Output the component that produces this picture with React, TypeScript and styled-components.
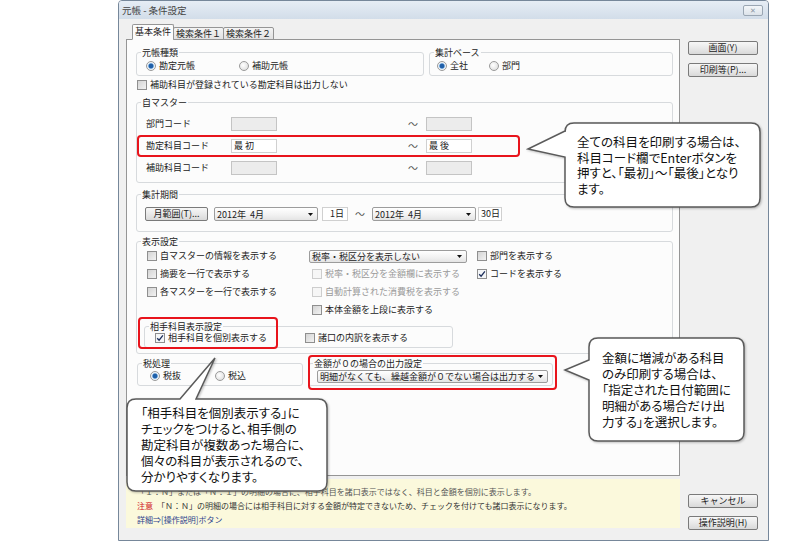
import React from 'react';
import styled, { createGlobalStyle } from 'styled-components';

const GlobalStyle = createGlobalStyle`
  html, body {
    margin: 0;
    padding: 0;
    background: #fff;
  }
  body {
    font-family: 'Noto Sans CJK JP', 'Noto Sans', sans-serif;
    color: #222;
  }
`;

const Page = styled.div`
  position: relative;
  width: 800px;
  height: 542px;
  overflow: hidden;
  background: #fff;
`;

/* ---------- window frame ---------- */

const Window = styled.div`
  margin-left: 118px;
  width: 651px;
  height: 541px;
  box-sizing: border-box;
  border: 1px solid #76879a;
  border-radius: 4px 4px 0 0;
  background: #f0f0f0;
  display: flex;
  flex-direction: column;
`;

const TitleBar = styled.div`
  height: 18px;
  flex: none;
  display: flex;
  align-items: center;
  justify-content: space-between;
  padding: 0 5px 0 3px;
  background: linear-gradient(#e6edf5, #d2dde9);
  border-radius: 3px 3px 0 0;
`;

const Title = styled.span`
  font-size: 9.5px;
  color: #444;
  line-height: 12px;
`;

const CloseButton = styled.span`
  width: 20px;
  height: 11px;
  box-sizing: border-box;
  border: 1px solid #9aa6b3;
  border-radius: 2px;
  background: linear-gradient(#f3f6f9, #dce3ea);
  display: flex;
  align-items: center;
  justify-content: center;
  color: #8a96a3;
  font-size: 7px;
  line-height: 7px;
`;

const Body = styled.div`
  flex: 1;
  display: flex;
`;

const MainCol = styled.div`
  width: 561px;
  box-sizing: border-box;
  padding: 6px 0 0 7px;
  display: flex;
  flex-direction: column;
`;

const SideCol = styled.div`
  flex: 1;
  display: flex;
  flex-direction: column;
  padding: 22px 0 10px 8px;
`;

const ButtonStack = styled.div`
  display: flex;
  flex-direction: column;
  gap: 8px;
  &:last-child {
    margin-top: auto;
  }
`;

const Button = styled.div<{ $w?: number }>`
  width: ${(p) => p.$w ?? 70}px;
  height: 14px;
  box-sizing: border-box;
  border: 1px solid #7a7a7a;
  border-radius: 2px;
  background: linear-gradient(#f7f7f7, #e9e9e9 50%, #d9d9d9);
  font-size: 9px;
  line-height: 12px;
  text-align: center;
  color: #222;
  white-space: nowrap;
  flex: none;
`;

/* ---------- tabs ---------- */

const TabStrip = styled.div`
  display: flex;
  align-items: flex-end;
  height: 15px;
  padding-left: 6px;
  margin-bottom: -1px;
  position: relative;
  z-index: 1;
`;

const Tab = styled.div<{ $active?: boolean }>`
  height: ${(p) => (p.$active ? 16 : 13)}px;
  box-sizing: border-box;
  padding: 0 2px;
  border: 1px solid #959595;
  border-bottom: ${(p) => (p.$active ? '1px solid #fcfcfc' : '1px solid #959595')};
  border-radius: 2px 2px 0 0;
  background: ${(p) => (p.$active ? '#fcfcfc' : 'linear-gradient(#f4f4f4, #e1e1e1)')};
  font-size: 9px;
  line-height: ${(p) => (p.$active ? 13 : 11)}px;
  margin-right: -1px;
  white-space: nowrap;
`;

const Panel = styled.div`
  height: 437px;
  flex: none;
  box-sizing: border-box;
  border: 1px solid #959595;
  background: #fcfcfc;
  padding: 7px 6px 0 9px;
  display: flex;
  flex-direction: column;
  align-items: stretch;
`;

const InfoBox = styled.div`
  margin-top: 3px;
  height: 49px;
  box-sizing: border-box;
  background: #fbf9dc;
  padding: 6px 0 0 11px;
  font-size: 8px;
  line-height: 14px;
  color: #555;
  white-space: nowrap;
`;

const InfoLine = styled.div<{ $tone?: 'plain' | 'link' }>`
  color: ${(p) => (p.$tone === 'link' ? '#2b3f8c' : p.$tone === 'plain' ? '#333' : '#555')};
`;

const Warn = styled.span`
  color: #d0151b;
  margin-right: 4px;
`;

/* ---------- group boxes ---------- */

const Group = styled.fieldset<{ $w?: number; $grow?: boolean; $mt?: number }>`
  margin: ${(p) => p.$mt ?? 0}px 0 0 0;
  padding: 0;
  border: 1px solid #d7dadd;
  border-radius: 3px;
  min-width: 0;
  box-sizing: border-box;
  flex: ${(p) => (p.$grow ? '1 1 0' : 'none')};
  ${(p) => (p.$w ? `width: ${p.$w}px;` : '')}
`;

const SubGroup = styled(Group)`
  margin: 5px 0 5px 7px;
`;

const Legend = styled.legend`
  font-size: 9px;
  line-height: 11px;
  padding: 0 1px;
  margin-left: 4px;
  color: #222;
  white-space: nowrap;
`;

const GroupRow = styled.div`
  display: flex;
  gap: 5px;
`;

const OptionRow = styled.div<{ $pl: number; $pt?: number; $pb?: number }>`
  display: flex;
  align-items: center;
  height: 12px;
  padding: ${(p) => p.$pt ?? 2}px 0 ${(p) => p.$pb ?? 3}px ${(p) => p.$pl}px;
`;

const Item = styled.label<{ $w?: number; $disabled?: boolean; $ml?: number }>`
  display: flex;
  align-items: center;
  gap: 2px;
  ${(p) => (p.$w ? `width: ${p.$w}px; flex: none;` : '')}
  margin-left: ${(p) => p.$ml ?? 0}px;
  font-size: 9px;
  line-height: 12px;
  color: ${(p) => (p.$disabled ? '#9a9a9a' : '#222')};
  white-space: nowrap;
`;

const RadioDot = styled.span<{ $on?: boolean }>`
  width: 10px;
  height: 10px;
  box-sizing: border-box;
  border-radius: 50%;
  border: 1px solid #9a9a9a;
  background: ${(p) =>
    p.$on
      ? 'radial-gradient(circle, #1f5fa8 0 2px, #7fb0e0 2.6px, #eef3f8 3.2px)'
      : 'radial-gradient(circle at 40% 40%, #ffffff, #d8d8d8)'};
  flex: none;
  margin-right: 1px;
`;

const CheckSquare = styled.span<{ $on?: boolean; $disabled?: boolean }>`
  width: 10px;
  height: 10px;
  box-sizing: border-box;
  border: 1px solid ${(p) => (p.$disabled ? '#cdcdcd' : '#8f8f8f')};
  background: ${(p) =>
    p.$disabled ? '#f6f6f6' : p.$on ? '#f4f6f8' : 'linear-gradient(135deg, #d4d4d4, #f2f2f2)'};
  display: flex;
  align-items: center;
  justify-content: center;
  flex: none;
  margin-right: 1px;
`;

const Radio = ({ label, on, w }: { label: string; on?: boolean; w?: number }) => (
  <Item $w={w}>
    <RadioDot $on={on} />
    {label}
  </Item>
);

const Check = ({
  label,
  on,
  disabled,
  w,
  ml,
}: {
  label: string;
  on?: boolean;
  disabled?: boolean;
  w?: number;
  ml?: number;
}) => (
  <Item $w={w} $disabled={disabled} $ml={ml}>
    <CheckSquare $on={on} $disabled={disabled}>
      {on && (
        <svg width="8" height="8" viewBox="0 0 8 8">
          <path d="M1.2 4.2 L3.1 6.2 L6.9 1.4" fill="none" stroke="#1d2f5c" strokeWidth="1.3" />
        </svg>
      )}
    </CheckSquare>
    {label}
  </Item>
);

const LooseCheck = styled.div`
  margin: 3px 0 6px 1px;
  height: 12px;
  display: flex;
`;

/* ---------- inputs ---------- */

const MasterGrid = styled.div`
  display: grid;
  grid-template-columns: 85px 46px 131px 18px 46px;
  grid-auto-rows: 14px;
  row-gap: 8px;
  align-items: center;
  padding: 9px 0 7px 9px;
`;

const FieldLabel = styled.span`
  font-size: 9px;
  line-height: 12px;
  white-space: nowrap;
`;

const Tilde = styled.span`
  font-size: 10px;
  color: #555;
  line-height: 12px;
`;

const TextBox = styled.div<{ $disabled?: boolean; $w?: number; $right?: boolean }>`
  ${(p) => (p.$w ? `width: ${p.$w}px;` : '')}
  height: 14px;
  box-sizing: border-box;
  border: 1px solid ${(p) => (p.$disabled ? '#c4c4c4' : '#d0d0d0')};
  background: ${(p) => (p.$disabled ? '#ececec' : '#fff')};
  font-size: 9px;
  line-height: 12px;
  padding: 0 3px 0 2px;
  text-align: ${(p) => (p.$right ? 'right' : 'left')};
  white-space: pre;
  flex: none;
`;

const PeriodRow = styled.div`
  display: flex;
  align-items: center;
  height: 14px;
  padding: 7px 0 10px 8px;
`;

const SelectBox = styled.div<{ $w: number; $h?: number }>`
  width: ${(p) => p.$w}px;
  height: ${(p) => p.$h ?? 14}px;
  box-sizing: border-box;
  border: 1px solid #9c9c9c;
  border-radius: 2px;
  background: linear-gradient(#ffffff, #f1f1f1 60%, #e4e4e4);
  display: flex;
  align-items: center;
  justify-content: space-between;
  padding: 0 4px 0 2px;
  font-size: 9px;
  line-height: 11px;
  white-space: pre;
  flex: none;
`;

const Select = ({ text, w, h }: { text: string; w: number; h?: number }) => (
  <SelectBox $w={w} $h={h}>
    {text}
    <svg width="5" height="3" viewBox="0 0 5 3">
      <path d="M0 0 H5 L2.5 3 Z" fill="#111" />
    </svg>
  </SelectBox>
);

const Gap = styled.span<{ $w: number }>`
  width: ${(p) => p.$w}px;
  flex: none;
  text-align: center;
  font-size: 10px;
  color: #555;
  line-height: 12px;
`;

const DisplayGrid = styled.div`
  display: grid;
  grid-template-columns: 162px 168px 1fr;
  grid-auto-rows: 12px;
  row-gap: 6px;
  align-items: center;
  padding: 3px 0 0 10px;
`;

const Empty = styled.span``;

const LowerRow = styled.div`
  display: flex;
  gap: 5px;
  margin: 4px 0 0 1px;
`;

const ZeroRow = styled.div`
  padding: 1px 0 2px 8px;
  height: 13px;
`;

/* ---------- annotations over the screenshot ---------- */

const RedFrame = styled.div<{ $x: number; $y: number; $w: number; $h: number }>`
  position: absolute;
  left: ${(p) => p.$x}px;
  top: ${(p) => p.$y}px;
  width: ${(p) => p.$w}px;
  height: ${(p) => p.$h}px;
  box-sizing: border-box;
  border: 2px solid #e8141c;
  border-radius: 4px;
`;

const CalloutWrap = styled.div<{ $x: number; $y: number; $w: number; $h: number; $pl: number }>`
  position: absolute;
  left: ${(p) => p.$x}px;
  top: ${(p) => p.$y}px;
  width: ${(p) => p.$w}px;
  height: ${(p) => p.$h}px;
  box-sizing: border-box;
  padding-left: ${(p) => p.$pl}px;
  display: flex;
  flex-direction: column;
  justify-content: center;
`;

const BubbleSvg = styled.svg`
  position: absolute;
  left: 0;
  top: 0;
  overflow: visible;
  filter: drop-shadow(1px 1px 1px rgba(0, 0, 0, 0.25));
`;

const CalloutText = styled.div<{ $size: number; $lh: number }>`
  position: relative;
  font-size: ${(p) => p.$size}px;
  line-height: ${(p) => p.$lh}px;
  color: #111;
  white-space: nowrap;
  font-feature-settings: 'palt';
`;

type Tail = { side: 'left' | 'top'; b1: number; b2: number; tx: number; ty: number };

const bubblePath = (w: number, h: number, r: number, t: Tail): string => {
  const top =
    t.side === 'top'
      ? `H ${t.b1} L ${t.tx} ${t.ty} L ${t.b2} 0 H ${w - r}`
      : `H ${w - r}`;
  const left =
    t.side === 'left'
      ? `V ${t.b2} L ${t.tx} ${t.ty} L 0 ${t.b1} V ${r}`
      : `V ${r}`;
  return `M ${r} 0 ${top} Q ${w} 0 ${w} ${r} V ${h - r} Q ${w} ${h} ${w - r} ${h} H ${r} Q 0 ${h} 0 ${h - r} ${left} Q 0 0 ${r} 0 Z`;
};

interface CalloutProps {
  x: number;
  y: number;
  w: number;
  h: number;
  pl: number;
  size: number;
  lh: number;
  tail: Tail;
  lines: string[];
}

const Callout = ({ x, y, w, h, pl, size, lh, tail, lines }: CalloutProps) => (
  <CalloutWrap $x={x} $y={y} $w={w} $h={h} $pl={pl}>
    <BubbleSvg width={w} height={h}>
      <path d={bubblePath(w, h, 9, tail)} fill="#fff" stroke="#5a5a5a" strokeWidth="1.5" />
    </BubbleSvg>
    <CalloutText $size={size} $lh={lh}>
      {lines.map((l) => (
        <div key={l}>{l}</div>
      ))}
    </CalloutText>
  </CalloutWrap>
);

const App = () => (
  <Page>
    <GlobalStyle />
    <Window>
      <TitleBar>
        <Title>元帳 - 条件設定</Title>
        <CloseButton>✕</CloseButton>
      </TitleBar>
      <Body>
        <MainCol>
          <TabStrip>
            <Tab $active>基本条件</Tab>
            <Tab>検索条件１</Tab>
            <Tab>検索条件２</Tab>
          </TabStrip>
          <Panel>
            <GroupRow>
              <Group $w={288}>
                <Legend>元帳種類</Legend>
                <OptionRow $pl={9}>
                  <Radio label="勘定元帳" on w={93} />
                  <Radio label="補助元帳" />
                </OptionRow>
              </Group>
              <Group $grow>
                <Legend>集計ベース</Legend>
                <OptionRow $pl={7}>
                  <Radio label="全社" on w={52} />
                  <Radio label="部門" />
                </OptionRow>
              </Group>
            </GroupRow>

            <LooseCheck>
              <Check label="補助科目が登録されている勘定科目は出力しない" />
            </LooseCheck>

            <Group>
              <Legend>自マスター</Legend>
              <MasterGrid>
                <FieldLabel>部門コード</FieldLabel>
                <TextBox $disabled />
                <Empty />
                <Tilde>～</Tilde>
                <TextBox $disabled />

                <FieldLabel>勘定科目コード</FieldLabel>
                <TextBox>最 初</TextBox>
                <Empty />
                <Tilde>～</Tilde>
                <TextBox>最 後</TextBox>

                <FieldLabel>補助科目コード</FieldLabel>
                <TextBox $disabled />
                <Empty />
                <Tilde>～</Tilde>
                <TextBox $disabled />
              </MasterGrid>
            </Group>

            <Group $mt={6}>
              <Legend>集計期間</Legend>
              <PeriodRow>
                <Button $w={63}>月範囲(T)...</Button>
                <Gap $w={6} />
                <Select text="2012年  4月" w={104} />
                <Gap $w={4} />
                <TextBox $w={26} $right>
                  1日
                </TextBox>
                <Gap $w={24}>～</Gap>
                <Select text="2012年  4月" w={104} />
                <Gap $w={2} />
                <TextBox $w={24} $right>
                  30日
                </TextBox>
              </PeriodRow>
            </Group>

            <Group $mt={4}>
              <Legend>表示設定</Legend>
              <DisplayGrid>
                <Check label="自マスターの情報を表示する" />
                <Select text="税率・税区分を表示しない" w={158} h={13} />
                <Check label="部門を表示する" />

                <Check label="摘要を一行で表示する" />
                <Check label="税率・税区分を金額欄に表示する" disabled ml={3} />
                <Check label="コードを表示する" on />

                <Check label="各マスターを一行で表示する" />
                <Check label="自動計算された消費税を表示する" disabled ml={3} />
                <Empty />

                <Empty />
                <Check label="本体金額を上段に表示する" ml={3} />
                <Empty />
              </DisplayGrid>
              <SubGroup $w={309}>
                <Legend>相手科目表示設定</Legend>
                <OptionRow $pl={10} $pt={0} $pb={3}>
                  <Check label="相手科目を個別表示する" on w={150} />
                  <Check label="諸口の内訳を表示する" />
                </OptionRow>
              </SubGroup>
            </Group>

            <LowerRow>
              <Group $w={166}>
                <Legend>税処理</Legend>
                <OptionRow $pl={12} $pt={1} $pb={3}>
                  <Radio label="税抜" on w={65} />
                  <Radio label="税込" />
                </OptionRow>
              </Group>
              <Group $w={245}>
                <Legend>金額が０の場合の出力設定</Legend>
                <ZeroRow>
                  <Select text="明細がなくても、繰越金額が０でない場合は出力する" w={231} h={13} />
                </ZeroRow>
              </Group>
            </LowerRow>
          </Panel>
          <InfoBox>
            <InfoLine>
              「１：Ｎ」または「Ｎ：１」の明細の場合に、相手科目を諸口表示ではなく、科目と金額を個別に表示します。
            </InfoLine>
            <InfoLine $tone="plain">
              <Warn>注意</Warn>
              「Ｎ：Ｎ」の明細の場合には相手科目に対する金額が特定できないため、チェックを付けても諸口表示になります。
            </InfoLine>
            <InfoLine $tone="link">詳細⇒[操作説明]ボタン</InfoLine>
          </InfoBox>
        </MainCol>
        <SideCol>
          <ButtonStack>
            <Button>画面(Y)</Button>
            <Button>印刷等(P)...</Button>
          </ButtonStack>
          <ButtonStack>
            <Button>キャンセル</Button>
            <Button>操作説明(H)</Button>
          </ButtonStack>
        </SideCol>
      </Body>
    </Window>

    <RedFrame $x={137} $y={135} $w={383} $h={22} />
    <RedFrame $x={138} $y={317} $w={140} $h={32} />
    <RedFrame $x={308} $y={355} $w={249} $h={35} />

    <Callout
      x={565}
      y={123}
      w={195}
      h={84}
      pl={12}
      size={12.5}
      lh={15.5}
      tail={{ side: 'left', b1: 8, b2: 34, tx: -37, ty: 26 }}
      lines={[
        '全ての科目を印刷する場合は、',
        '科目コード欄でEnterボタンを',
        '押すと、「最初」～「最後」となり',
        'ます。',
      ]}
    />
    <Callout
      x={589}
      y={338}
      w={155}
      h={103}
      pl={13}
      size={12.5}
      lh={16}
      tail={{ side: 'left', b1: 22, b2: 42, tx: -24, ty: 32 }}
      lines={[
        '金額に増減がある科目',
        'のみ印刷する場合は、',
        '「指定された日付範囲に',
        '明細がある場合だけ出',
        '力する」を選択します。',
      ]}
    />
    <Callout
      x={127}
      y={399}
      w={200}
      h={92}
      pl={14}
      size={12.5}
      lh={16}
      tail={{ side: 'top', b1: 53, b2: 69, tx: 88, ty: -41 }}
      lines={[
        '「相手科目を個別表示する」に',
        'チェックをつけると、相手側の',
        '勘定科目が複数あった場合に、',
        '個々の科目が表示されるので、',
        '分かりやすくなります。',
      ]}
    />
  </Page>
);

export default App;
